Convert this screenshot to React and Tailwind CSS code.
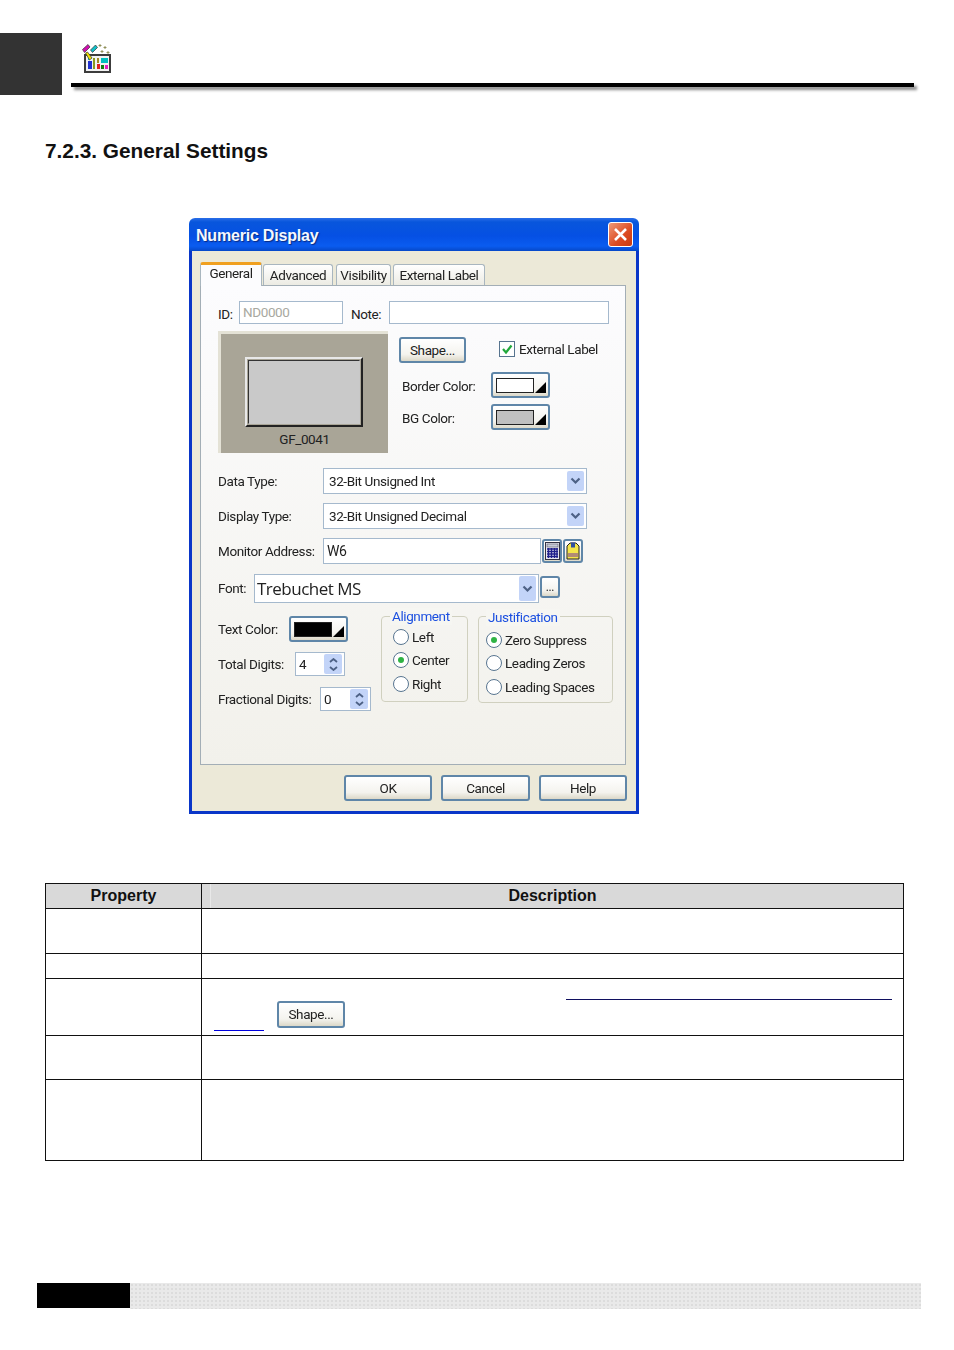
import React from "react";

const field = "border border-[#a5b9cd] bg-white";
const xpBtn = "flex items-center justify-center rounded-[3px] border-2 border-[#5f86a8] bg-[linear-gradient(#ffffff,#f4f3ee_70%,#dcd8c8)] text-[#222]";

function AppIcon() {
  return (
    <svg width="29" height="29" viewBox="0 0 29 29" shapeRendering="crispEdges">
      <rect x="2" y="10" width="27" height="19" rx="1.500" fill="#3c3c3c" />
      <rect x="4" y="12" width="23" height="15" fill="#f2f2f2" />
      <rect x="6" y="14" width="2" height="2" fill="#00c8e0" />
      <rect x="6" y="17" width="4" height="8" fill="#2030d0" />
      <rect x="11" y="14" width="2" height="11" fill="#8a9a20" />
      <rect x="15" y="14" width="2" height="5" fill="#a08a20" />
      <rect x="15" y="20" width="3" height="5" fill="#e02020" />
      <rect x="19" y="14" width="7" height="5" fill="#00c0c0" />
      <rect x="19" y="21" width="3" height="4" fill="#108010" />
      <rect x="23" y="21" width="3" height="4" fill="#e020c0" />
      <g shapeRendering="auto">
        <path d="M0.500 5.500 L6 0.500 L8 3 L2.500 8.500 Z" fill="#d010b0" stroke="#333" strokeWidth="0.700" />
        <path d="M8.500 6 L13.500 1 L15.500 3.500 L10.500 8.500 Z" fill="#10c0c8" stroke="#333" strokeWidth="0.700" />
        <path d="M3.500 9 L5.500 8 L10 14 L7.500 16 Z" fill="#f0e000" stroke="#333" strokeWidth="0.700" />
        <path d="M18 0v3M16.500 1.500h3M23 2v3M21.500 3.500h3M20 6v3M18.500 7.500h3M26 7v3M24.500 8.500h3" stroke="#8a8a50" strokeWidth="0.900" fill="none" />
      </g>
    </svg>
  );
}

function Arrow() {
  return (
    <span className="flex h-[20px] w-[17px] items-center justify-center rounded-[2px] bg-[#c3d4f8]">
      <svg width="11" height="8" viewBox="0 0 11 8"><path d="M1.500 1.500 L5.500 5.500 L9.500 1.500" fill="none" stroke="#4d6185" strokeWidth="2.200" /></svg>
    </span>
  );
}

function Select({ width, height = 26, textClass = "pl-[5px]", arrow = <Arrow />, children }) {
  return (
    <div className={`${field} flex items-center justify-between pr-[2px] ${textClass}`} style={{ width, height }}>
      <span className="pt-px">{children}</span>
      {arrow}
    </div>
  );
}

function Spin({ width, value }) {
  return (
    <div className={`${field} flex h-[24px] items-center justify-between pl-[3px] pr-[2px]`} style={{ width }}>
      <span>{value}</span>
      <span className="flex h-[20px] w-[18px] flex-col items-center justify-center gap-[3px] rounded-[2px] bg-[#c3d4f8]">
        <svg width="9" height="5" viewBox="0 0 9 5"><path d="M1 4 L4.500 1 L8 4" fill="none" stroke="#4d6185" strokeWidth="1.800" /></svg>
        <svg width="9" height="5" viewBox="0 0 9 5"><path d="M1 1 L4.500 4 L8 1" fill="none" stroke="#4d6185" strokeWidth="1.800" /></svg>
      </span>
    </div>
  );
}

function ColorBtn({ color }) {
  return (
    <div className={`${xpBtn} h-[26px] w-[59px] gap-[1px] pl-[1px]`}>
      <span className="block h-[15px] w-[38px] border border-[#222]" style={{ background: color }} />
      <svg width="11" height="11" viewBox="0 0 11 11" className="mt-[4px]"><path d="M11 0 V11 H0 Z" fill="#000" /></svg>
    </div>
  );
}

function Radio({ checked, label }) {
  return (
    <div className="flex h-[23.500px] items-center">
      <span className="flex h-[16px] w-[16px] items-center justify-center rounded-full border-[1.500px] border-[#57748f] bg-white">
        {checked && <span className="block h-[6px] w-[6px] rounded-full bg-[#2fb344]" />}
      </span>
      <span className="ml-[3px]">{label}</span>
    </div>
  );
}

function Tab({ children, className }) {
  return (
    <div className={`mb-px flex h-[21px] items-center justify-center rounded-t-[3px] border border-b-0 border-[#a9b6bf] bg-[linear-gradient(#ffffff,#ecebe3)] ${className}`}>
      {children}
    </div>
  );
}

function Dialog() {
  return (
    <div className="ml-[189px] mt-[55px] flex h-[596px] w-[450px] flex-col overflow-hidden whitespace-nowrap rounded-t-[6px] font-['Roboto',sans-serif] text-[13.500px] tracking-[-0.400px] text-[#222] blur-[0.35px]">
      <div className="flex h-[33px] items-center justify-between bg-[linear-gradient(#2a6ee8,#0856dc_12%,#0550e4_55%,#0a5cf0_85%,#0648c8)] pl-[7px] pr-[6px]">
        <span className="pt-[3px] font-['Liberation_Sans',sans-serif] text-[16px] font-bold tracking-[-0.200px] text-[#f4f8ff] [text-shadow:1px_1px_1px_#0a2a80]">Numeric Display</span>
        <span className="flex h-[25px] w-[25px] items-center justify-center rounded-[3px] border border-white bg-[linear-gradient(135deg,#f09a78,#dc4a20_60%,#c83a10)]">
          <svg width="15" height="15" viewBox="0 0 15 15"><path d="M2 2 L13 13 M13 2 L2 13" stroke="#fff" strokeWidth="2.600" /></svg>
        </span>
      </div>
      <div className="flex flex-1 flex-col border-x-[3px] border-b-[3px] border-[#0a36c8] bg-[#ece9d8] pl-[8px]">
        <div className="relative z-10 mt-[11px] -mb-px flex h-[24px] items-end">
          <div className="flex h-[24px] w-[62px] items-center justify-center rounded-t-[3px] border-x border-[#a9b6bf] border-t-[3px] border-t-[#f0a020] bg-[#fcfcfe] pb-[4px]">General</div>
          <Tab className="ml-[1px] w-[70px]">Advanced</Tab>
          <Tab className="ml-[3px] w-[55px]">Visibility</Tab>
          <Tab className="ml-[2px] w-[92px]">External Label</Tab>
        </div>
        <div className="h-[480px] w-[426px] border border-[#a3aeb6] bg-[linear-gradient(#fcfcfe,#f2f1eb)] pl-[17px] pt-[15px]">
          <div className="flex h-[23px] items-center">
            <span className="w-[21px] pt-[3px]">ID:</span>
            <div className={`${field} flex h-[23px] w-[104px] items-center pl-[3px] text-[#a8a8a0]`}>ND0000</div>
            <span className="ml-[8px] w-[38px] pt-[3px]">Note:</span>
            <div className={`${field} h-[23px] w-[220px]`} />
          </div>

          <div className="mt-[7px] flex h-[122px]">
            <div className="flex w-[170px] flex-col border-l-[3px] border-t-[3px] border-[#e4e2d6] bg-[#a9a597]">
              <div className="ml-[24px] mt-[23px] h-[70px] w-[118px] border-2 border-b-[#222] border-l-[#e8e8e8] border-r-[#222] border-t-[#e8e8e8] p-px">
                <div className="h-full w-full border border-b-[#c8c8c8] border-l-[#333] border-r-[#c8c8c8] border-t-[#333] bg-[#c9c9c9]" />
              </div>
              <div className="mt-[2px] text-center leading-[20px]">GF_0041</div>
            </div>
            <div className="ml-[11px] flex flex-col">
              <div className="mt-[6px] flex h-[26px] items-center">
                <div className={`${xpBtn} h-[26px] w-[67px]`}>Shape...</div>
                <span className="ml-[33px] mb-[2px] flex h-[16px] w-[16px] items-center justify-center border border-[#57748f] bg-white">
                  <svg width="12" height="12" viewBox="0 0 12 12"><path d="M2 6 L5 9.500 L10.500 2.500" fill="none" stroke="#22a83c" strokeWidth="2.200" /></svg>
                </span>
                <span className="ml-[4px] mb-[2px]">External Label</span>
              </div>
              <div className="mt-[9px] flex h-[26px] items-center pl-[3px]">
                <span className="w-[89px] pt-[2px]">Border Color:</span>
                <ColorBtn color="#ffffff" />
              </div>
              <div className="mt-[6px] flex h-[26px] items-center pl-[3px]">
                <span className="w-[89px] pt-[2px]">BG Color:</span>
                <ColorBtn color="#c0c0c0" />
              </div>
            </div>
          </div>

          <div className="mt-[15px] flex h-[26px] items-center">
            <span className="w-[105px]">Data Type:</span>
            <Select width={264}>32-Bit Unsigned Int</Select>
          </div>
          <div className="mt-[9px] flex h-[26px] items-center">
            <span className="w-[105px]">Display Type:</span>
            <Select width={264}>32-Bit Unsigned Decimal</Select>
          </div>
          <div className="mt-[9px] flex h-[26px] items-center">
            <span className="w-[105px]">Monitor Address:</span>
            <div className={`${field} flex h-[26px] w-[218px] items-center pl-[3px] text-[14px]`}>W6</div>
            <span className={`${xpBtn} ml-[1px] h-[24px] w-[20px] border-[#4f7090]`}>
              <svg width="15" height="18" viewBox="0 0 15 18">
                <rect x="0.500" y="0.500" width="14" height="17" fill="#e8e8f0" stroke="#334" />
                <rect x="2" y="2" width="11" height="3" fill="#c8ccd8" stroke="#445" strokeWidth="0.500" />
                <path d="M2 7h11M2 9.500h11M2 12h11M2 14.500h11M3.500 6v10M6.500 6v10M9.500 6v10M12 6v10" stroke="#20208c" strokeWidth="1.300" fill="none" />
              </svg>
            </span>
            <span className={`${xpBtn} ml-[1px] h-[24px] w-[20px] border-[#4f7090]`}>
              <svg width="14" height="18" viewBox="0 0 14 18">
                <path d="M1 4 L4 1 H10 L13 4 V17 H1 Z" fill="#f4e64a" stroke="#222" />
                <rect x="5" y="0.500" width="4" height="5" fill="#3050a0" />
                <path d="M3 11v4M5 11v4M7 11v4M9 11v4M11 11v4" stroke="#7030a0" strokeWidth="1" />
              </svg>
            </span>
          </div>
          <div className="mt-[10px] flex h-[30px] items-start">
            <span className="flex h-[29px] w-[36px] items-center">Font:</span>
            <Select width={285} height={29} textClass="font-['Open_Sans',sans-serif] text-[17px] tracking-[-0.500px] pl-[2px]" arrow={<span className="flex h-[25px] w-[17px] items-center justify-center rounded-[2px] bg-[#c3d4f8]"><svg width="11" height="8" viewBox="0 0 11 8"><path d="M1.500 1.500 L5.500 5.500 L9.500 1.500" fill="none" stroke="#4d6185" strokeWidth="2.200" /></svg></span>}>Trebuchet MS</Select>
            <span className={`${xpBtn} ml-[1px] mt-[2px] h-[22px] w-[20px] border-[#4f7090] text-[12px]`}>...</span>
          </div>

          <div className="flex">
            <div className="w-[163px]">
              <div className="mt-[12px] flex h-[26px] items-center">
                <span className="w-[71px] pt-px">Text Color:</span>
                <ColorBtn color="#000000" />
              </div>
              <div className="mt-[10px] flex h-[24px] items-center">
                <span className="w-[77px] pt-px">Total Digits:</span>
                <Spin width={50} value="4" />
              </div>
              <div className="mt-[11px] flex h-[24px] items-center">
                <span className="w-[102px] pt-px">Fractional Digits:</span>
                <Spin width={51} value="0" />
              </div>
            </div>
            <div className="relative mt-[12px] h-[86px] w-[87px] rounded-[4px] border border-[#d0d0bf] pl-[11px] pt-[8px]">
              <span className="absolute left-[8px] top-[-9px] bg-[#f6f6f2] px-[2px] leading-[17px] text-[#1c50e0]">Alignment</span>
              <Radio label="Left" />
              <Radio checked label="Center" />
              <Radio label="Right" />
            </div>
            <div className="relative ml-[10px] mt-[12px] h-[87px] w-[135px] rounded-[4px] border border-[#d0d0bf] pl-[7px] pt-[11px]">
              <span className="absolute left-[7px] top-[-8px] bg-[#f6f6f2] px-[2px] leading-[17px] text-[#1c50e0]">Justification</span>
              <Radio checked label="Zero Suppress" />
              <Radio label="Leading Zeros" />
              <Radio label="Leading Spaces" />
            </div>
          </div>
        </div>
        <div className="mt-[10px] flex justify-end gap-[9px] pr-[9px]">
          <div className={`${xpBtn} h-[26px] w-[88px] border-[#3c76c4]`}>OK</div>
          <div className={`${xpBtn} h-[26px] w-[89px]`}>Cancel</div>
          <div className={`${xpBtn} h-[26px] w-[88px]`}>Help</div>
        </div>
      </div>
    </div>
  );
}

function PropTable() {
  const cell = "border border-[#111] align-top p-0";
  return (
    <table className="ml-[45px] mt-[69px] w-[859px] table-fixed border-collapse font-['Liberation_Sans',sans-serif]">
      <colgroup>
        <col className="w-[156px]" />
        <col />
      </colgroup>
      <tbody>
        <tr className="h-[25px] bg-[#d9d9d9] text-[16px] font-bold text-[#111]">
          <th className="border border-[#111] p-0 font-bold">Property</th>
          <th className="relative border border-[#111] p-0 font-bold">
            <span className="absolute left-[8px] top-0 h-full w-px bg-[#e8e8e8]" />
            Description
          </th>
        </tr>
        <tr className="h-[45px]"><td className={cell} /><td className={cell} /></tr>
        <tr className="h-[25px]"><td className={cell} /><td className={cell} /></tr>
        <tr className="h-[57px]">
          <td className={cell} />
          <td className={cell}>
            <div className="pl-[12px] pt-[20px]">
              <div className="ml-[352px] h-px w-[326px] bg-[#101060]" />
              <div className="mt-px flex">
                <div className="mt-[29px] h-px w-[50px] bg-[#0000e0]" />
                <div className={`${xpBtn} ml-[13px] h-[27px] w-[68px] border-[#4a80c8] font-['Roboto',sans-serif] text-[13.500px] tracking-[-0.400px] blur-[0.35px]`}>Shape...</div>
              </div>
            </div>
          </td>
        </tr>
        <tr className="h-[44px]"><td className={cell} /><td className={cell} /></tr>
        <tr className="h-[81px]"><td className={cell} /><td className={cell} /></tr>
      </tbody>
    </table>
  );
}

export default function App() {
  return (
    <div className="h-[1350px] w-[954px] overflow-hidden bg-white">
      <div className="flex pt-[33px]">
        <div className="h-[62px] w-[62px] bg-[#333333]" />
        <div className="ml-[9px] w-[843px]">
          <div className="ml-[11px] mt-[11px] h-[29px] w-[29px]"><AppIcon /></div>
          <div className="mt-[10px] h-[4px] bg-black shadow-[3px_3px_3px_#8a8a8a]" />
        </div>
      </div>
      <h1 className="ml-[45px] mt-[44px] font-['Liberation_Sans',sans-serif] text-[20.800px] font-bold leading-[24px] text-[#111]">7.2.3. General Settings</h1>
      <Dialog />
      <PropTable />
      <div className="ml-[37px] mt-[122px] flex h-[26px] w-[884px]">
        <div className="h-[25px] w-[93px] bg-black" />
        <div className="flex-1 bg-[#e9e9e9] bg-[radial-gradient(#dcdcdc_1px,transparent_1px)] bg-[length:4px_4px]" />
      </div>
    </div>
  );
}
